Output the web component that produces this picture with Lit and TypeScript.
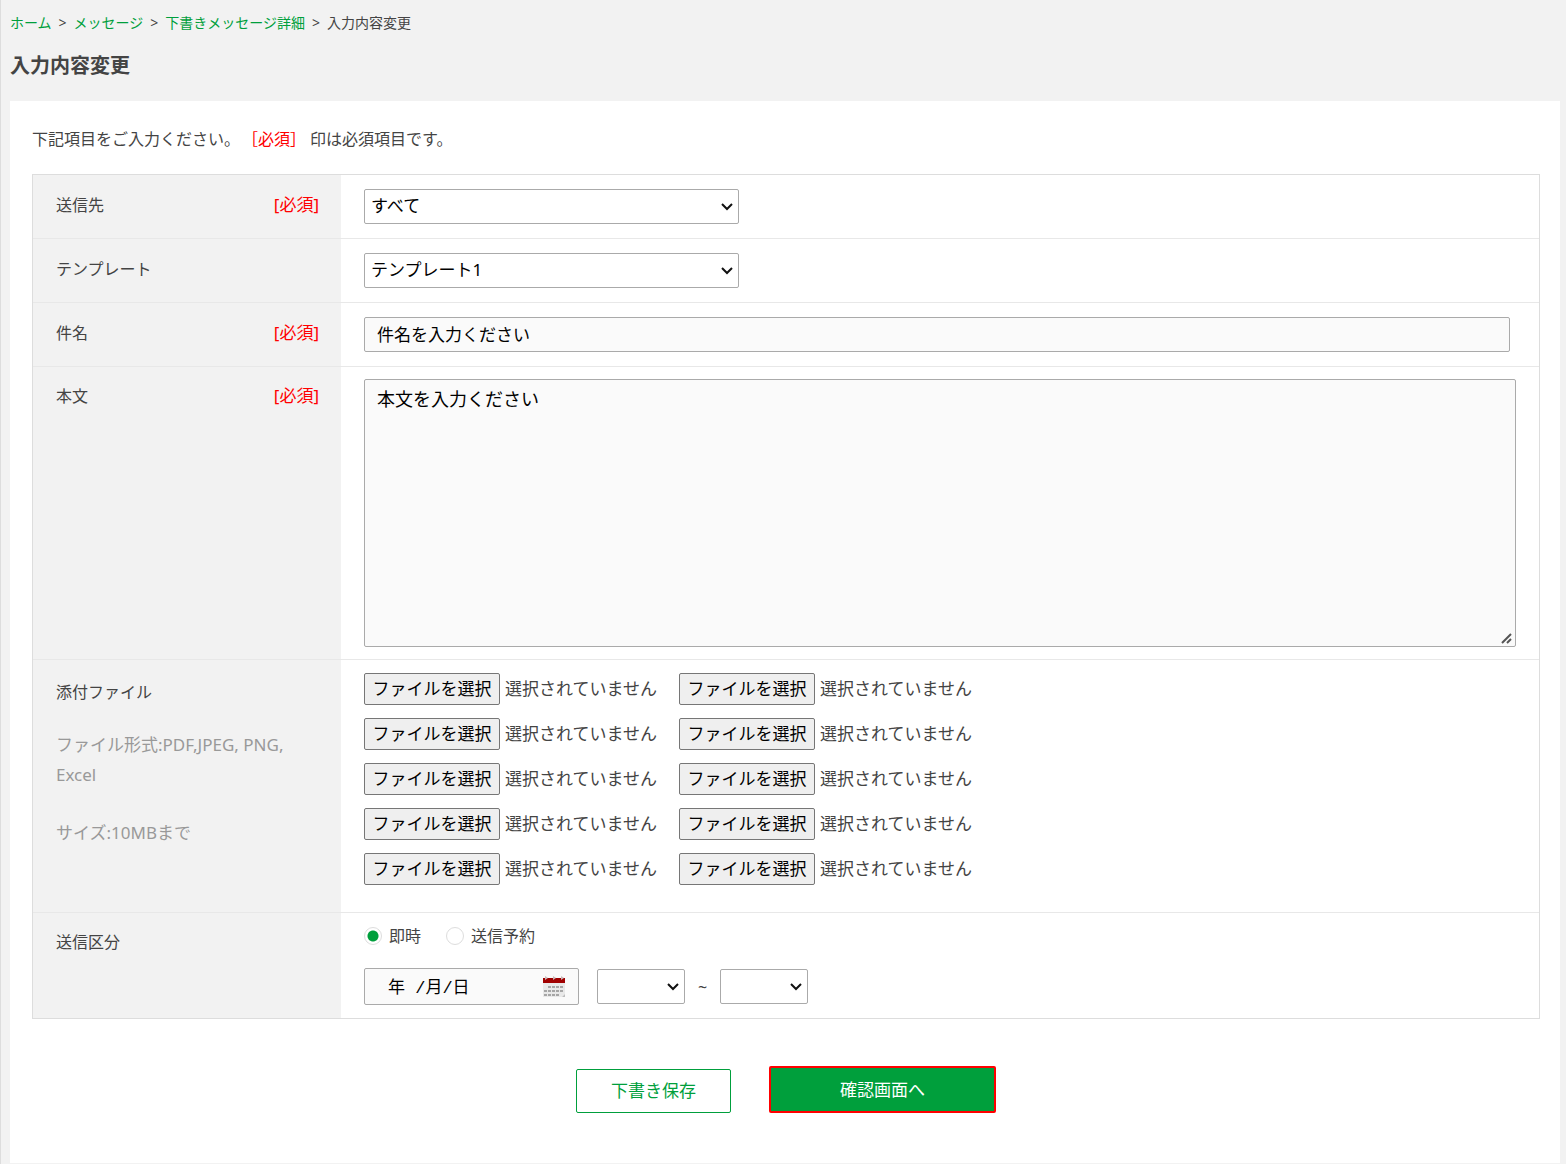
import { LitElement, html, css, svg } from "lit";
import { customElement, state } from "lit/decorators.js";

const ATTACHMENT_COUNT = 10;
const HOURS = Array.from({ length: 24 }, (_, h) => `${h}:00`);

const calendarIcon = svg`
  <svg class="calendar-icon" width="24" height="22" viewBox="0 0 24 22" aria-hidden="true">
    <path d="M1 6H23V18L20 21H1Z" fill="#e9e9e9" />
    <path d="M23 18L20 21H23Z" fill="#bdbdbd" />
    <rect x="1" y="2" width="22" height="5" fill="#a00000" />
    <g fill="#c9b9b9">
      <path d="M3 0l3 2-3 2zM11 0l3 2-3 2zM19 0l3 2-3 2z" />
    </g>
    <g fill="#a6a6a6">
      <path d="M6 10h3v2H6zM10 10h3v2h-3zM14 10h3v2h-3zM18 10h3v2h-3z" />
      <path d="M2 14h3v2H2zM6 14h3v2H6zM10 14h3v2h-3zM14 14h3v2h-3zM18 14h3v2h-3z" />
      <path d="M2 18h3v2H2zM6 18h3v2H6zM10 18h3v2h-3zM14 18h3v2h-3z" />
    </g>
  </svg>`;

@customElement("file-picker")
export class FilePicker extends LitElement {
  @state() private fileName = "";

  static styles = css`
    :host {
      display: flex;
      align-items: center;
      gap: 5px;
      font-size: 17px;
      line-height: 30px;
      color: #444;
    }
    .native {
      display: none;
    }
    .choose {
      box-sizing: border-box;
      height: 32px;
      width: 136px;
      padding: 0;
      border: 1px solid #767676;
      border-radius: 2px;
      background: #efefef;
      color: #000;
      font: inherit;
      line-height: 28px;
      white-space: nowrap;
    }
    .status {
      white-space: nowrap;
    }
  `;

  private open() {
    this.renderRoot.querySelector<HTMLInputElement>(".native")?.click();
  }

  private picked(e: Event) {
    this.fileName = (e.target as HTMLInputElement).files?.[0]?.name ?? "";
  }

  render() {
    return html`
      <input class="native" type="file" aria-label="添付ファイル" @change=${this.picked} />
      <button class="choose" type="button" @click=${this.open}>ファイルを選択</button>
      <span class="status">${this.fileName || "選択されていません"}</span>
    `;
  }
}

@customElement("app-root")
export class AppRoot extends LitElement {
  static styles = css`
    :host {
      display: block;
      box-sizing: border-box;
      min-height: 100vh;
      padding: 0 6px 1px 9px;
      border-left: 1px solid #ddd;
      background: #f2f2f2;
      color: #444;
      font-family: "Noto Sans", "Noto Sans CJK JP", sans-serif;
      font-size: 16px;
      line-height: 30px;
    }
    .breadcrumb {
      display: flex;
      gap: 7px;
      padding-top: 8px;
      font-size: 14px;
    }
    .breadcrumb a {
      color: #009f3c;
      text-decoration: none;
    }
    .title {
      margin: 0;
      padding: 13px 0 20px;
      font-size: 20px;
      line-height: 30px;
      font-weight: 700;
    }
    .card {
      padding: 23px 20px 50px 22px;
      background: #fff;
    }
    .lead {
      margin: 0 0 20px;
    }
    .required {
      color: #f00;
    }
    .lead .required {
      margin: 0 4px 0 10px;
    }
    .form-table {
      border: 1px solid #ddd;
    }
    .row {
      display: grid;
      grid-template-columns: 308px minmax(0, 1fr);
      border-bottom: 1px solid #e8e8e8;
    }
    .row:last-child {
      border-bottom: 0;
    }
    .head {
      display: flex;
      justify-content: space-between;
      align-items: flex-start;
      padding: 15px 22px 0 23px;
      background: #f2f2f2;
    }
    .head .required {
      font-size: 17px;
    }
    .head.tall {
      padding-top: 14px;
    }
    .head.stack {
      flex-direction: column;
      justify-content: flex-start;
      padding-top: 17px;
    }
    .note {
      margin: 23px 0 0;
      color: #999;
      font-size: 17px;
    }
    .note + .note {
      margin-top: 28px;
    }
    .body {
      padding: 14px 23px 14px 23px;
    }
    .body.message {
      padding-top: 12px;
      padding-bottom: 12px;
    }
    .body.files {
      padding-top: 13px;
      padding-bottom: 27px;
    }
    .body.timing {
      padding-bottom: 13px;
    }
    .select,
    .text,
    .textarea,
    .date {
      box-sizing: border-box;
      border: 1px solid #aaa;
      border-radius: 2px;
      background-color: #fafafa;
      color: #000;
      font-family: inherit;
      font-size: 17px;
    }
    .select {
      appearance: none;
      display: block;
      width: 375px;
      max-width: 100%;
      height: 35px;
      padding: 0 24px 2px 6px;
      background: #fff
        url("data:image/svg+xml,%3Csvg xmlns='http://www.w3.org/2000/svg' width='12' height='8'%3E%3Cpath d='M1 1L6 6L11 1' fill='none' stroke='%23111' stroke-width='2'/%3E%3C/svg%3E")
        no-repeat right 5px center;
    }
    .select.time {
      width: 88px;
    }
    .text {
      display: block;
      width: calc(100% - 6px);
      height: 35px;
      padding: 0 12px 2px;
    }
    .textarea {
      display: block;
      width: 100%;
      height: 268px;
      padding: 6px 12px;
      font-family: "Liberation Mono", "Noto Sans CJK JP", monospace;
      font-size: 18px;
      line-height: 30px;
    }
    .textarea::-webkit-resizer {
      background: url("data:image/svg+xml,%3Csvg xmlns='http://www.w3.org/2000/svg' width='15' height='15'%3E%3Cpath d='M2 12L11 3M7 12L11 8' fill='none' stroke='%23555' stroke-width='2'/%3E%3C/svg%3E")
        no-repeat right bottom;
    }
    .file-grid {
      display: grid;
      grid-template-columns: repeat(2, max-content);
      gap: 13px 22px;
    }
    .radios {
      display: flex;
      gap: 25px;
      margin: -6px 0 17px;
    }
    .radio-label {
      display: flex;
      align-items: center;
      gap: 7px;
    }
    .radio {
      appearance: none;
      box-sizing: border-box;
      width: 18px;
      height: 18px;
      margin: 0;
      border: 1px solid #ddd;
      border-radius: 50%;
      background: #fff;
    }
    .radio:checked {
      background: radial-gradient(circle, #009f3c 5px, #fff 6px);
    }
    .schedule {
      display: flex;
      align-items: center;
      gap: 13px;
    }
    .date {
      display: flex;
      align-items: center;
      width: 215px;
      height: 37px;
      margin-right: 5px;
      padding: 0 12px 0 23px;
    }
    .date-text {
      flex: 1;
      min-width: 0;
      padding: 0 0 2px;
      border: 0;
      background: none;
      color: #000;
      font-family: "Liberation Mono", "Noto Sans CJK JP", monospace;
      font-size: 17px;
    }
    .calendar {
      display: flex;
      padding: 0;
      border: 0;
      background: none;
    }
    .actions {
      display: flex;
      justify-content: center;
      align-items: flex-end;
      gap: 38px;
      margin-top: 47px;
    }
    .button {
      box-sizing: border-box;
      width: 155px;
      height: 44px;
      padding: 0 0 4px;
      border: 1px solid #009f3c;
      border-radius: 2px;
      background: #fff;
      color: #009f3c;
      font-family: inherit;
      font-size: 17px;
    }
    .button.primary {
      width: 227px;
      height: 47px;
      padding: 0 0 2px;
      border: 2px solid #f00;
      background: #009f3c;
      color: #fff;
    }
  `;

  private hourSelect(label: string) {
    return html`<select class="select time" aria-label=${label}>
      <option></option>
      ${HOURS.map((h) => html`<option>${h}</option>`)}
    </select>`;
  }

  render() {
    return html`
      <nav class="breadcrumb">
        <a href="#">ホーム</a><span>&gt;</span>
        <a href="#">メッセージ</a><span>&gt;</span>
        <a href="#">下書きメッセージ詳細</a><span>&gt;</span>
        <span>入力内容変更</span>
      </nav>
      <h1 class="title">入力内容変更</h1>
      <main class="card">
        <p class="lead">下記項目をご入力ください。<span class="required">［必須］</span>印は必須項目です。</p>
        <form @submit=${(e: Event) => e.preventDefault()}>
          <div class="form-table">
            <div class="row">
              <div class="head"><label for="dest">送信先</label><span class="required">[必須]</span></div>
              <div class="body">
                <select class="select" id="dest"><option>すべて</option></select>
              </div>
            </div>
            <div class="row">
              <div class="head"><label for="template">テンプレート</label></div>
              <div class="body">
                <select class="select" id="template"><option>テンプレート1</option></select>
              </div>
            </div>
            <div class="row">
              <div class="head"><label for="subject">件名</label><span class="required">[必須]</span></div>
              <div class="body">
                <input class="text" id="subject" type="text" value="件名を入力ください" />
              </div>
            </div>
            <div class="row">
              <div class="head tall"><label for="message">本文</label><span class="required">[必須]</span></div>
              <div class="body message">
                <textarea class="textarea" id="message" .value=${"本文を入力ください"}></textarea>
              </div>
            </div>
            <div class="row">
              <div class="head stack">
                <span>添付ファイル</span>
                <p class="note">ファイル形式:PDF,JPEG, PNG, Excel</p>
                <p class="note">サイズ:10MBまで</p>
              </div>
              <div class="body files">
                <div class="file-grid">
                  ${Array.from({ length: ATTACHMENT_COUNT }, () => html`<file-picker></file-picker>`)}
                </div>
              </div>
            </div>
            <div class="row">
              <div class="head tall"><span id="timing">送信区分</span></div>
              <div class="body timing">
                <div class="radios" role="radiogroup" aria-labelledby="timing">
                  <label class="radio-label"><input class="radio" type="radio" name="timing" checked />即時</label>
                  <label class="radio-label"><input class="radio" type="radio" name="timing" />送信予約</label>
                </div>
                <div class="schedule">
                  <div class="date">
                    <input class="date-text" type="text" aria-label="送信日" value="年 /月/日" />
                    <button class="calendar" type="button" aria-label="カレンダー">${calendarIcon}</button>
                  </div>
                  ${this.hourSelect("開始時刻")}<span>~</span>${this.hourSelect("終了時刻")}
                </div>
              </div>
            </div>
          </div>
          <div class="actions">
            <button class="button" type="button">下書き保存</button>
            <button class="button primary" type="submit">確認画面へ</button>
          </div>
        </form>
      </main>
    `;
  }
}
